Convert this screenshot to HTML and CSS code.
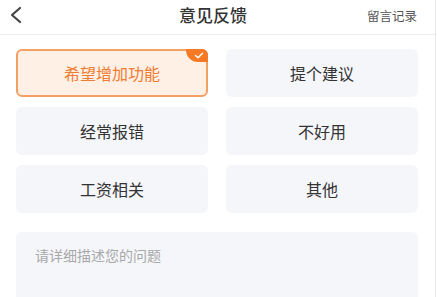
FILE: index.html
```html
<!DOCTYPE html>
<html>
<head>
    <meta charset="UTF-8">
    <meta name="viewport" content="width=device-width, initial-scale=1.0">
    <title>意见反馈</title>
    <link rel="stylesheet" href="styles.css">
</head>
<body>
    <div class="page">
        <div class="header">
            <span class="back">
                <svg width="14" height="18" viewBox="0 0 14 18">
                    <path d="M11 2 L3 9 L11 16" fill="none" stroke="#444" stroke-width="2.2" stroke-linecap="round" stroke-linejoin="round"/>
                </svg>
            </span>
            <h1>意见反馈</h1>
            <span class="record">留言记录</span>
        </div>
        <div class="options">
            <div class="option selected">
                希望增加功能
                <span class="badge">
                    <svg width="10" height="7" viewBox="0 0 10 7">
                        <path d="M1.5 3.5 L4 5.8 L8.5 1.2" fill="none" stroke="#fff" stroke-width="1.4" stroke-linecap="round" stroke-linejoin="round"/>
                    </svg>
                </span>
            </div>
            <div class="option">提个建议</div>
            <div class="option">经常报错</div>
            <div class="option">不好用</div>
            <div class="option">工资相关</div>
            <div class="option">其他</div>
        </div>
        <div class="describe">请详细描述您的问题</div>
    </div>
</body>
</html>
```

FILE: styles.css
```css
body {
    margin: 0;
    padding: 0;
    background-color: #fff;
    font-family: "Noto Sans CJK SC", "Noto Sans", sans-serif;
    overflow: hidden;
}

.page {
    width: 435px;
    height: 297px;
    border-right: 1px solid #e8e8e8;
    overflow: hidden;
}

.header {
    height: 34px;
    border-bottom: 1px solid #ececec;
    display: flex;
    align-items: center;
    justify-content: space-between;
    padding: 0 18px 0 9px;
}

.back {
    width: 60px;
    display: flex;
    align-items: center;
    margin-top: -4px;
}

h1 {
    margin: 0;
    font-size: 17px;
    font-weight: 500;
    color: #333;
    margin-top: -5px;
}

.record {
    width: 60px;
    text-align: right;
    font-size: 12.5px;
    color: #555;
    margin-top: -4px;
}

.options {
    display: grid;
    grid-template-columns: 192px 192px;
    column-gap: 18px;
    row-gap: 10px;
    padding: 14px 17px 0 16px;
}

.option {
    position: relative;
    height: 48px;
    box-sizing: border-box;
    border-radius: 6px;
    background-color: #f5f6fa;
    color: #333;
    font-size: 16px;
    display: flex;
    align-items: center;
    justify-content: center;
}

.option.selected {
    background-color: #fff0e5;
    border: 2px solid #f5a063;
    color: #f07b32;
}

.badge {
    position: absolute;
    top: -2px;
    right: -2px;
    width: 22px;
    height: 13px;
    background-color: #f67a26;
    border-radius: 0 6px 0 12px;
    display: flex;
    align-items: center;
    justify-content: center;
    padding-left: 3px;
    box-sizing: border-box;
}

.describe {
    margin: 19px 17px 0 16px;
    height: 100px;
    border-radius: 6px;
    background-color: #f5f6fa;
    color: #a8a8a8;
    font-size: 14px;
    padding: 13px 19px;
    box-sizing: border-box;
}
```
